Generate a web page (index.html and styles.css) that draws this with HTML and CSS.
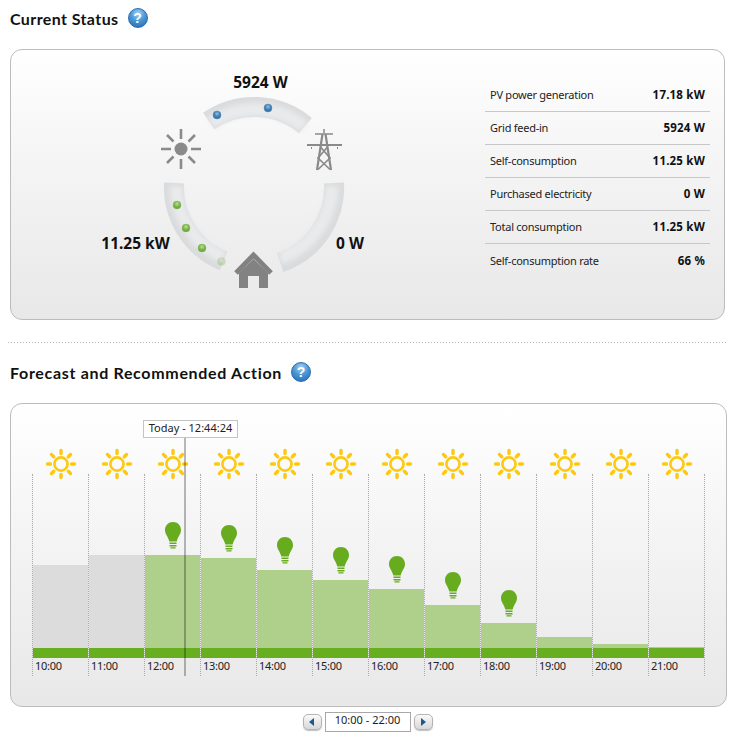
FILE: index.html
```html
<!DOCTYPE html>
<html lang="en">
<head>
<meta charset="utf-8">
<title>Current Status</title>
<link rel="stylesheet" href="styles.css">
</head>
<body>
<svg class="defs" width="0" height="0" aria-hidden="true">
  <symbol id="sun" viewBox="0 0 32 32">
    <circle cx="16" cy="16" r="6.6" fill="none" stroke="#fdc90f" stroke-width="2.6"/>
    <g stroke="#fdc90f" stroke-width="3.4" stroke-linecap="round">
      <path d="M16 2.500v3M16 26.500v3M2.500 16h3M26.500 16h3M6.500 6.500l2.200 2.200M23.300 23.300l2.200 2.200M6.500 25.500l2.200-2.200M23.300 8.700l2.200-2.200"/>
    </g>
  </symbol>
  <symbol id="bulb" viewBox="0 0 16 27">
    <path fill="#66ac1e" d="M8 0C3.500 0 0 3.500 0 8c0 4.500 3.200 6.500 4.300 11.500h7.400C12.800 14.500 16 12.500 16 8c0-4.500-3.500-8-8-8z"/>
    <path fill="#66ac1e" d="M4.500 20.500h7V22h-7zM4.500 23h7v1.500h-7zM5.500 25.300h5v1.200h-5z"/>
  </symbol>
</svg>

<main class="page">
  <h2 class="heading heading-short">Current Status <span class="help">?</span></h2>
  <section class="panel status">
    <svg class="ring" viewBox="11 50 474 269" width="474" height="269">
      <defs>
        <filter id="soft" x="-20%" y="-20%" width="140%" height="140%"><feGaussianBlur stdDeviation="2.400"/></filter>
        <radialGradient id="blueDot" cx="50%" cy="35%" r="70%"><stop offset="0" stop-color="#9cc0dd"/><stop offset=".5" stop-color="#3f7fb4"/><stop offset="1" stop-color="#2f6a9e"/></radialGradient>
        <radialGradient id="greenDot" cx="50%" cy="35%" r="70%"><stop offset="0" stop-color="#bfe09a"/><stop offset=".5" stop-color="#7ab648"/><stop offset="1" stop-color="#5d9a30"/></radialGradient>
      </defs>
      <g fill="none">
        <g stroke="#d9dbdd" stroke-width="20">
          <path d="M208.800 121A80 80 0 0 1 305.400 125.700"/>
          <path d="M174 183A80 80 0 0 0 223.500 261"/>
          <path d="M334 183A80 80 0 0 1 280.200 262.600"/>
        </g>
        <g stroke="#e9eaeb" stroke-width="13" filter="url(#soft)">
          <path d="M211 123A78 78 0 0 1 304 127"/>
          <path d="M176 186A78 78 0 0 0 224 257"/>
          <path d="M332 186A78 78 0 0 1 280 258"/>
        </g>
      </g>
      <g fill="url(#blueDot)" stroke="#5d8fb8" stroke-width=".5">
        <circle cx="217" cy="115" r="4"/>
        <circle cx="268" cy="108" r="4"/>
      </g>
      <g fill="url(#greenDot)" stroke="#8fbf68" stroke-width=".5">
        <circle cx="177" cy="205" r="4"/>
        <circle cx="186" cy="228" r="4"/>
        <circle cx="202" cy="248" r="4"/>
        <circle cx="221.500" cy="261.500" r="4" opacity=".3"/>
      </g>
      <g class="glyph-sun">
        <circle cx="181" cy="149" r="6.500" fill="#8a8a8a"/>
        <path stroke="#8a8a8a" stroke-width="2.600" d="M181 129v10M181 159v10M161 149h10M191 149h10M167 135l6.500 6.500M188.500 156.500l6.500 6.500M167 163l6.500-6.500M188.500 141.500l6.500-6.500"/>
      </g>
      <g fill="none" stroke="#8a8a8a">
        <path stroke-width="2" d="M307 145h35M312 148h-1M338 148h-1"/>
        <path stroke-width="1.500" d="M315 134h18M324 129v4"/>
        <path stroke-width="2.200" d="M322.500 134L317 170M325.500 134L331 170"/>
        <path stroke-width="1.700" d="M320.500 147L330 158L318 169.500M327.500 147L318 158L330 169.500"/>
      </g>
      <g fill="#828282">
        <path d="M239 288V273L253.500 259L268 273V288H259V276H248V288Z"/>
        <path fill="none" stroke="#828282" stroke-width="5" d="M236 273L253.500 255L271 273"/>
      </g>
      <text class="ring-label" x="260.500" y="88" text-anchor="middle">5924 W</text>
      <text class="ring-label" x="135.500" y="249" text-anchor="middle">11.25 kW</text>
      <text class="ring-label" x="350" y="249" text-anchor="middle">0 W</text>
    </svg>
    <dl class="summary">
      <div class="row"><dt>PV power generation</dt><dd>17.18 kW</dd></div>
      <div class="row"><dt>Grid feed-in</dt><dd>5924 W</dd></div>
      <div class="row"><dt>Self-consumption</dt><dd>11.25 kW</dd></div>
      <div class="row"><dt>Purchased electricity</dt><dd>0 W</dd></div>
      <div class="row"><dt>Total consumption</dt><dd>11.25 kW</dd></div>
      <div class="row"><dt>Self-consumption rate</dt><dd>66 %</dd></div>
    </dl>
  </section>

  <hr class="divider">

  <h2 class="heading heading-long">Forecast and Recommended Action <span class="help">?</span></h2>
  <section class="panel forecast">
    <div class="chart">
      <div class="tooltip">Today - 12:44:24</div>
      <div class="now"></div>
      <div class="col"><svg class="sun"><use href="#sun"/></svg><div class="plot"><div class="slot"></div><div class="bar past" style="height:83px"></div><div class="band"></div><div class="hour">10:00</div></div></div>
      <div class="col"><svg class="sun"><use href="#sun"/></svg><div class="plot"><div class="slot"></div><div class="bar past" style="height:93px"></div><div class="band"></div><div class="hour">11:00</div></div></div>
      <div class="col"><svg class="sun"><use href="#sun"/></svg><div class="plot"><div class="slot"><svg class="bulb"><use href="#bulb"/></svg></div><div class="bar" style="height:93px"></div><div class="band"></div><div class="hour">12:00</div></div></div>
      <div class="col"><svg class="sun"><use href="#sun"/></svg><div class="plot"><div class="slot"><svg class="bulb"><use href="#bulb"/></svg></div><div class="bar" style="height:90px"></div><div class="band"></div><div class="hour">13:00</div></div></div>
      <div class="col"><svg class="sun"><use href="#sun"/></svg><div class="plot"><div class="slot"><svg class="bulb"><use href="#bulb"/></svg></div><div class="bar" style="height:78px"></div><div class="band"></div><div class="hour">14:00</div></div></div>
      <div class="col"><svg class="sun"><use href="#sun"/></svg><div class="plot"><div class="slot"><svg class="bulb"><use href="#bulb"/></svg></div><div class="bar" style="height:68px"></div><div class="band"></div><div class="hour">15:00</div></div></div>
      <div class="col"><svg class="sun"><use href="#sun"/></svg><div class="plot"><div class="slot"><svg class="bulb"><use href="#bulb"/></svg></div><div class="bar" style="height:59px"></div><div class="band"></div><div class="hour">16:00</div></div></div>
      <div class="col"><svg class="sun"><use href="#sun"/></svg><div class="plot"><div class="slot"><svg class="bulb"><use href="#bulb"/></svg></div><div class="bar" style="height:43px"></div><div class="band"></div><div class="hour">17:00</div></div></div>
      <div class="col"><svg class="sun"><use href="#sun"/></svg><div class="plot"><div class="slot"><svg class="bulb"><use href="#bulb"/></svg></div><div class="bar" style="height:25px"></div><div class="band"></div><div class="hour">18:00</div></div></div>
      <div class="col"><svg class="sun"><use href="#sun"/></svg><div class="plot"><div class="slot"></div><div class="bar" style="height:11px"></div><div class="band"></div><div class="hour">19:00</div></div></div>
      <div class="col"><svg class="sun"><use href="#sun"/></svg><div class="plot"><div class="slot"></div><div class="bar" style="height:4px"></div><div class="band"></div><div class="hour">20:00</div></div></div>
      <div class="col last"><svg class="sun"><use href="#sun"/></svg><div class="plot"><div class="slot"></div><div class="bar" style="height:1px"></div><div class="band"></div><div class="hour">21:00</div></div></div>
    </div>
  </section>
  <nav class="pager">
    <button class="step" type="button" aria-label="Previous"><svg width="6" height="8" viewBox="0 0 6 8"><path d="M5 0v8L0 4z" fill="#1c5a8c"/></svg></button>
    <div class="range">10:00 - 22:00</div>
    <button class="step" type="button" aria-label="Next"><svg width="6" height="8" viewBox="0 0 6 8"><path d="M1 0v8l5-4z" fill="#1c5a8c"/></svg></button>
  </nav>
</main>
</body>
</html>
```

FILE: styles.css
```css
* { box-sizing: border-box; }

html, body { margin: 0; padding: 0; background: #fff; }

body {
  font-family: "Noto Sans", "DejaVu Sans", sans-serif;
  font-size: 11px;
  letter-spacing: -.25px;
  color: #222;
}

.defs { position: absolute; }

.page { width: 740px; padding-left: 10px; }

.heading {
  display: flex;
  align-items: center;
  gap: 9px;
  height: 38px;
  margin: 0;
  padding-bottom: 2px;
  font-family: Lato, sans-serif;
  font-size: 16px;
  font-weight: 700;
  color: #111;
}

.heading-short { letter-spacing: .4px; }

.heading-long { letter-spacing: .68px; }

.help {
  width: 20px;
  height: 20px;
  border-radius: 50%;
  border: 1px solid #2a6cad;
  background: radial-gradient(circle at 50% 25%, #a6d2f2 0, #4d97d6 45%, #1f67b0 100%);
  color: #fff;
  font-family: "Liberation Sans", sans-serif;
  font-size: 14px;
  font-weight: 700;
  letter-spacing: 0;
  line-height: 18px;
  text-align: center;
}

.panel {
  border: 1px solid #bcbcbc;
  border-radius: 12px;
  background: linear-gradient(#fff 0, #f6f6f6 35%, #e8e8e8 100%);
}

.status {
  display: flex;
  width: 715px;
  height: 271px;
  margin-top: 11px;
}

.ring { display: block; flex: none; }

.ring-label {
  font-family: "Noto Sans", sans-serif;
  font-size: 15.5px;
  font-weight: 700;
  letter-spacing: 0;
  fill: #111;
}

.summary { width: 225px; margin: 29px 0 0; }

.row {
  display: flex;
  justify-content: space-between;
  align-items: center;
  height: 33px;
  padding: 0 5px 2px;
  border-bottom: 1px solid #c8c8c8;
}

.row:last-child { padding-bottom: 0; border-bottom: 0; }

.row dt { margin: 0; }

.row dd {
  margin: 0;
  font-size: 11.5px;
  font-weight: 700;
  letter-spacing: .2px;
  color: #111;
}

.divider {
  width: 720px;
  height: 1px;
  margin: 22px 0 11px -2px;
  border: 0;
  background: repeating-linear-gradient(90deg, #b4b4b4 0 1px, transparent 1px 3px);
}

.forecast {
  width: 717px;
  height: 304px;
  margin-top: 11px;
  padding: 44px 0 0 21px;
}

.chart { position: relative; display: flex; }

.col { display: flex; flex-direction: column; width: 56px; }

.col.last { width: 57px; }

.sun { display: block; width: 32px; height: 32px; margin: 0 0 -6px 13px; flex: none; }

.plot {
  display: flex;
  flex-direction: column;
  height: 202px;
  border-left: 1px dotted #a8a8a8;
}

.last .plot { border-right: 1px dotted #a8a8a8; }

.slot {
  display: flex;
  flex: 1;
  align-items: flex-end;
  justify-content: center;
  padding-bottom: 6px;
}

.bulb { display: block; width: 16px; height: 27px; }

.bar { background: #aed08a; flex: none; }

.bar.past { background: #dcdcdc; }

.band { height: 10px; background: #68af20; flex: none; }

.hour { height: 18px; padding-left: 2px; line-height: 16px; color: #222; flex: none; }

.tooltip {
  position: absolute;
  left: 111px;
  top: -28px;
  z-index: 2;
  width: 95px;
  height: 18px;
  border: 1px solid #c4c4c4;
  background: #fff;
  line-height: 13px;
  letter-spacing: 0;
  text-align: center;
}

.now {
  position: absolute;
  left: 152px;
  top: -11px;
  z-index: 1;
  width: 2px;
  height: 239px;
  background: rgba(0, 0, 0, .27);
}

.pager {
  display: flex;
  align-items: center;
  justify-content: center;
  gap: 3px;
  width: 715px;
  height: 20px;
  margin-top: 5px;
}

.step {
  display: flex;
  align-items: center;
  justify-content: center;
  width: 19px;
  height: 16px;
  padding: 0;
  border: 1px solid #b4b4b4;
  border-radius: 5px;
  background: linear-gradient(#fafafa, #d8d8d8);
  box-shadow: 0 1px 1px rgba(0, 0, 0, .25);
}

.range {
  width: 86px;
  height: 20px;
  border: 1px solid #a8a8a8;
  background: #fff;
  line-height: 14px;
  letter-spacing: 0;
  text-align: center;
}
```
